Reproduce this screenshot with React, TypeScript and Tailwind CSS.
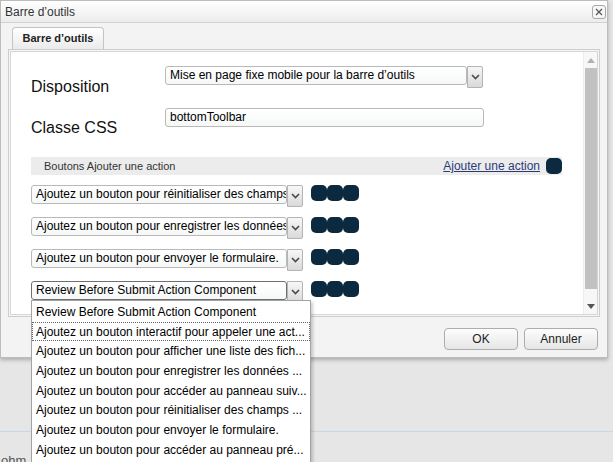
import React from 'react';

// ─── Data ─────────────────────────────────────────────────────────────────────

const ACTION_ROWS = [
  { label: 'Ajoutez un bouton pour réinitialiser des champs du formulaire.', focused: false },
  { label: 'Ajoutez un bouton pour enregistrer les données du formulaire.', focused: false },
  { label: 'Ajoutez un bouton pour envoyer le formulaire.', focused: false },
  { label: 'Review Before Submit Action Component', focused: true },
];

const OPTIONS = [
  'Review Before Submit Action Component',
  'Ajoutez un bouton interactif pour appeler une act...',
  'Ajoutez un bouton pour afficher une liste des fich...',
  'Ajoutez un bouton pour enregistrer les données ...',
  'Ajoutez un bouton pour accéder au panneau suiv...',
  'Ajoutez un bouton pour réinitialiser des champs ...',
  'Ajoutez un bouton pour envoyer le formulaire.',
  'Ajoutez un bouton pour accéder au panneau pré...',
];

// ─── Small pieces ─────────────────────────────────────────────────────────────

const Chevron = () => (
  <svg width="9" height="6" viewBox="0 0 9 6" className="block">
    <polyline points="1,1 4.5,4.5 8,1" fill="none" stroke="#4a4a4a" strokeWidth="1.6" />
  </svg>
);

const ArrowButton = () => (
  <div className="w-[16px] h-[22px] flex items-center justify-center border border-[#b4b4b4] rounded-r-[2px] bg-gradient-to-b from-[#f7f7f7] to-[#d9d9d9]">
    <Chevron />
  </div>
);

const DarkKey = () => <div className="w-[16px] h-[16px] rounded-[5px] bg-[#0b2a3f]" />;

const Select: React.FC<{ text: string; width: string; focused?: boolean }> = ({ text, width, focused }) => (
  <div className="flex items-start">
    <div
      className={`${width} h-[19px] rounded-[3px] border ${focused ? 'border-[#6f6f6f]' : 'border-[#b9b9b9]'} bg-gradient-to-b from-[#ffffff] to-[#f6f8f8] pl-[4px] pr-[2px] overflow-hidden whitespace-nowrap text-[12px] leading-[17px] text-black`}
    >
      {text}
    </div>
    <ArrowButton />
  </div>
);

const Button: React.FC<{ children: React.ReactNode }> = ({ children }) => (
  <div className="w-[74px] h-[22px] rounded-[4px] border border-[#adadad] bg-gradient-to-b from-[#fdfdfd] to-[#e6e6e6] flex items-center justify-center text-[12px] text-[#222]">
    {children}
  </div>
);

// ─── Dialog ───────────────────────────────────────────────────────────────────

export default function App() {
  return (
    <div
      className="relative w-[613px] h-[462px] overflow-hidden bg-[#e6e6e6] text-[#222]"
      style={{ fontFamily: '"Liberation Sans", Arial, sans-serif' }}
    >
      <div className="w-[608px] h-[358px] border border-[#bcbcbc] bg-[#f3f3f3] shadow-[0_2px_4px_rgba(0,0,0,0.25)] flex flex-col">
        {/* Title bar */}
        <div className="h-[22px] flex items-center justify-between pl-[4px] pr-[1px] border-b border-[#d2d2d2] bg-gradient-to-b from-[#ffffff] to-[#ececec]">
          <span className="text-[12px] text-[#333]">Barre d’outils</span>
          <div className="w-[14px] h-[14px] rounded-[3px] border border-[#a8a8a8] bg-[#f6f6f6] flex items-center justify-center">
            <svg width="8" height="8" viewBox="0 0 8 8">
              <path d="M1 1 L7 7 M7 1 L1 7" stroke="#555" strokeWidth="1.2" />
            </svg>
          </div>
        </div>

        {/* Body */}
        <div className="flex-1 px-[7px] pt-[4px]">
          <div className="ml-[4px] w-[92px] h-[22px] rounded-t-[4px] border border-b-0 border-[#c4c4c4] bg-gradient-to-b from-[#ffffff] to-[#ebebeb] flex items-center justify-center text-[11px] font-bold text-[#222]">
            Barre d’outils
          </div>

          {/* Tab panel */}
          <div className="h-[268px] border border-[#cdcdcd] bg-[#f6f6f6] p-[1px]">
            <div className="h-full border border-[#d6d6d6] bg-white flex">
              <div className="flex-1 pl-[20px] pt-[14px]">
                <div className="h-[42px] flex items-start">
                  <div className="w-[134px] mt-[12px] text-[16px] leading-[18px] text-[#111]">Disposition</div>
                  <Select text="Mise en page fixe mobile pour la barre d’outils" width="w-[302px]" />
                </div>
                <div className="h-[49px] flex items-start">
                  <div className="w-[134px] mt-[11px] text-[16px] leading-[18px] text-[#111]">Classe CSS</div>
                  <div className="w-[319px] h-[19px] rounded-[3px] border border-[#b9b9b9] bg-gradient-to-b from-[#ffffff] to-[#f6f8f8] pl-[4px] text-[12px] leading-[17px] text-black">
                    bottomToolbar
                  </div>
                </div>

                {/* Section header */}
                <div className="w-[531px] h-[18px] bg-[#ececec] flex items-center pl-[13px]">
                  <span className="flex-1 text-[11px] text-[#333]">Boutons Ajouter une action</span>
                  <span className="text-[12px] text-[#2b3b78] underline">Ajouter une action</span>
                  <div className="ml-[6px]">
                    <DarkKey />
                  </div>
                </div>

                <div className="mt-[10px]">
                  {ACTION_ROWS.map((row, i) => (
                    <div key={i} className="h-[32px] flex items-start">
                      <Select text={row.label} width="w-[256px]" focused={row.focused} />
                      <div className="ml-[8px] flex">
                        <DarkKey />
                        <DarkKey />
                        <DarkKey />
                      </div>
                    </div>
                  ))}
                </div>
              </div>

              {/* Scrollbar */}
              <div className="w-[14px] border-l border-[#ececec] bg-[#f7f7f7] flex flex-col items-center">
                <div className="h-[16px] flex items-center justify-center">
                  <svg width="8" height="5" viewBox="0 0 8 5">
                    <polygon points="4,0 8,5 0,5" fill="#b0b0b0" />
                  </svg>
                </div>
                <div className="w-[12px] h-[221px] bg-[#c1c1c1]" />
                <div className="flex-1" />
                <div className="h-[16px] flex items-center justify-center">
                  <svg width="8" height="5" viewBox="0 0 8 5">
                    <polygon points="0,0 8,0 4,5" fill="#555" />
                  </svg>
                </div>
              </div>
            </div>
          </div>

          {/* Footer */}
          <div className="flex justify-end gap-[6px] pr-[2px] pt-[11px]">
            <Button>OK</Button>
            <Button>Annuler</Button>
          </div>
        </div>
      </div>

      {/* Page behind the dialog */}
      <div className="h-[74px] border-b border-[#c9d6e4]" />
      <div className="mt-[19px] pl-[1px] text-[13px] text-[#555]">ohm</div>

      {/* Open list of the focused select */}
      <div className="absolute left-[31px] top-[300px] w-[280px] h-[170px] border border-[#a3a3a3] bg-white shadow-[2px_2px_3px_rgba(0,0,0,0.2)] pt-[1px]">
        {OPTIONS.map((opt, i) => (
          <div
            key={i}
            className={`h-[19.7px] pl-[3px] flex items-center whitespace-nowrap text-[12px] text-black ${
              i === 1 ? 'border border-dotted border-[#666]' : 'border border-transparent'
            }`}
          >
            {opt}
          </div>
        ))}
      </div>
    </div>
  );
}
